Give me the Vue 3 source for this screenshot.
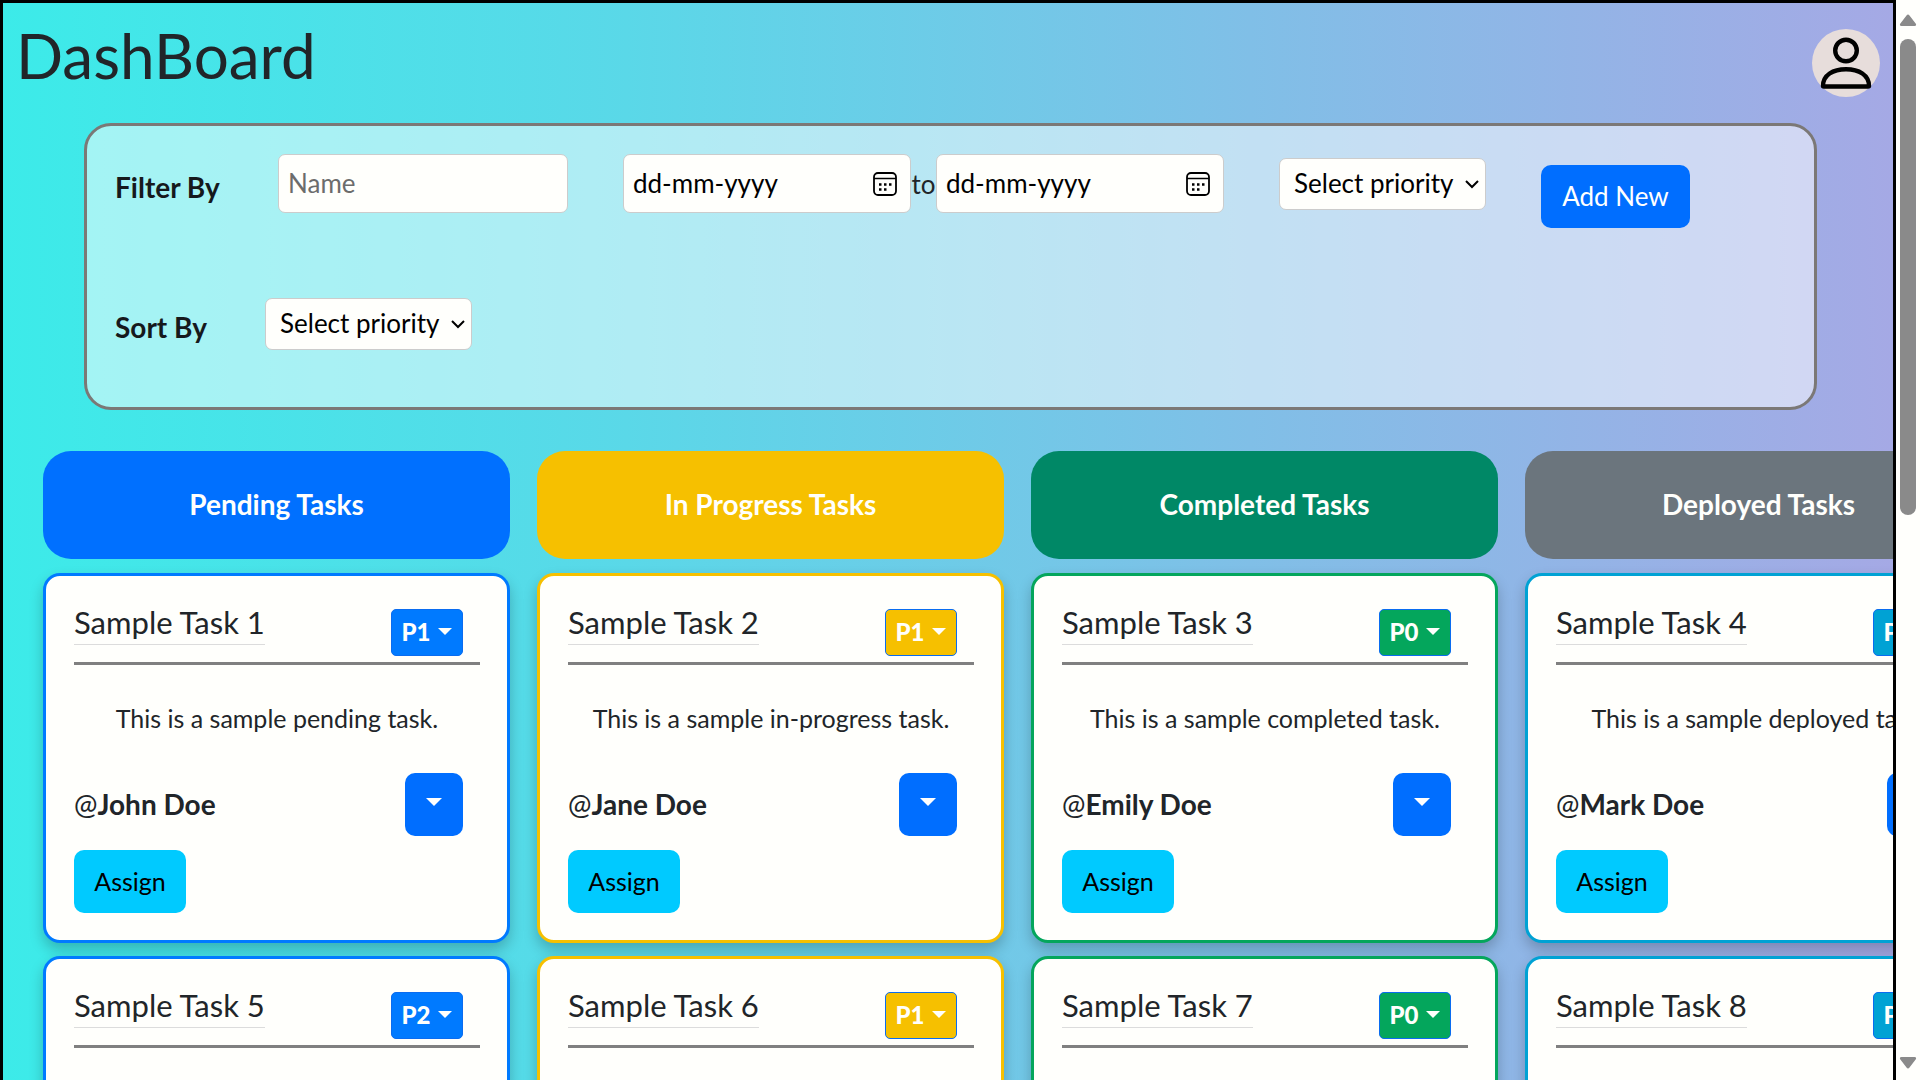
<script setup>
import { ref } from 'vue'

const name = ref('')
const from = ref('')
const to = ref('')

const columns = [
  {
    title: 'Pending Tasks',
    tone: 'pending',
    tasks: [
      { title: 'Sample Task 1', priority: 'P1', text: 'This is a sample pending task.', owner: 'John Doe' },
      { title: 'Sample Task 5', priority: 'P2' },
    ],
  },
  {
    title: 'In Progress Tasks',
    tone: 'progress',
    tasks: [
      { title: 'Sample Task 2', priority: 'P1', text: 'This is a sample in-progress task.', owner: 'Jane Doe' },
      { title: 'Sample Task 6', priority: 'P1' },
    ],
  },
  {
    title: 'Completed Tasks',
    tone: 'completed',
    tasks: [
      { title: 'Sample Task 3', priority: 'P0', text: 'This is a sample completed task.', owner: 'Emily Doe' },
      { title: 'Sample Task 7', priority: 'P0' },
    ],
  },
  {
    title: 'Deployed Tasks',
    tone: 'deployed',
    tasks: [
      { title: 'Sample Task 4', priority: 'P1', text: 'This is a sample deployed task.', owner: 'Mark Doe' },
      { title: 'Sample Task 8', priority: 'P1' },
    ],
  },
]
</script>

<template>
  <div class="window">
    <main class="page">
      <header class="top">
        <h1>DashBoard</h1>
        <button class="avatar" type="button" aria-label="Profile">
          <svg viewBox="0 0 68 68" fill="none" stroke="#000" stroke-width="4.4" stroke-linejoin="round">
            <circle cx="34" cy="21.500" r="10.800" />
            <path d="M11 57C11 46 21 40.300 34 40.300S57 46 57 57Q57 57.500 56 57.500H12Q11 57.500 11 57Z" />
          </svg>
        </button>
      </header>

      <section class="filters">
        <div class="row">
          <label class="caption" for="name">Filter By</label>
          <input id="name" v-model="name" class="box name" type="text" placeholder="Name" />
          <div class="range">
            <div class="box date">
              <input v-model="from" type="text" placeholder="dd-mm-yyyy" aria-label="From date" />
              <svg class="cal" viewBox="0 0 24 24" aria-hidden="true">
                <rect x="1" y="1" width="22" height="22" rx="4" fill="none" stroke="#000" stroke-width="1.800" />
                <path d="M1 6.500H23" stroke="#000" stroke-width="1.500" />
                <path d="M6 12.500h2.500M11 12.500h2.500M16 12.500h2.500M6 17.500h2.500M11 17.500h2.500" stroke="#000" stroke-width="2.500" />
              </svg>
            </div>
            <span>to</span>
            <div class="box date">
              <input v-model="to" type="text" placeholder="dd-mm-yyyy" aria-label="To date" />
              <svg class="cal" viewBox="0 0 24 24" aria-hidden="true">
                <rect x="1" y="1" width="22" height="22" rx="4" fill="none" stroke="#000" stroke-width="1.800" />
                <path d="M1 6.500H23" stroke="#000" stroke-width="1.500" />
                <path d="M6 12.500h2.500M11 12.500h2.500M16 12.500h2.500M6 17.500h2.500M11 17.500h2.500" stroke="#000" stroke-width="2.500" />
              </svg>
            </div>
          </div>
          <div class="pick">
            <select class="box" aria-label="Filter priority">
              <option>Select priority</option>
            </select>
            <svg class="chevron" viewBox="0 0 16 10" aria-hidden="true">
              <path d="M2 2l6 6 6-6" fill="none" stroke="#000" stroke-width="2" />
            </svg>
          </div>
          <button class="btn add" type="button">Add New</button>
        </div>
        <div class="row">
          <label class="caption sort" for="sort">Sort By</label>
          <div class="pick">
            <select id="sort" class="box">
              <option>Select priority</option>
            </select>
            <svg class="chevron" viewBox="0 0 16 10" aria-hidden="true">
              <path d="M2 2l6 6 6-6" fill="none" stroke="#000" stroke-width="2" />
            </svg>
          </div>
        </div>
      </section>

      <section class="board">
        <div v-for="col in columns" :key="col.title" class="column" :class="col.tone">
          <h2>{{ col.title }}</h2>
          <article v-for="task in col.tasks" :key="task.title" class="card">
            <div class="head">
              <h3>{{ task.title }}</h3>
              <button class="priority" type="button">{{ task.priority }}<i class="caret"></i></button>
            </div>
            <template v-if="task.text">
              <p>{{ task.text }}</p>
              <div class="owner">
                <span>@<b>{{ task.owner }}</b></span>
                <button class="btn more" type="button" aria-label="Change status"><i class="caret"></i></button>
              </div>
              <button class="btn assign" type="button">Assign</button>
            </template>
          </article>
        </div>
      </section>
    </main>

    <div class="scrollbar" aria-hidden="true">
      <svg viewBox="0 0 18 12"><path d="M7.500 1.500Q9-.5 10.500 1.500L17 10Q17.500 12 15.500 12H2.500Q.5 12 1 10Z" fill="#8a8a8a" /></svg>
      <div class="track">
        <div class="thumb"></div>
        <div class="rest"></div>
      </div>
      <svg viewBox="0 0 18 12"><path d="M7.500 10.500Q9 12.500 10.500 10.500L17 2Q17.500 0 15.500 0H2.500Q.5 0 1 2Z" fill="#8a8a8a" /></svg>
    </div>
  </div>
</template>

<style>
body {
  margin: 0;
  overflow: hidden;
}
</style>

<style scoped>
* {
  box-sizing: border-box;
}
.window {
  display: flex;
  height: 100vh;
  background: #fffffc;
  font-family: "Gill Sans MT", Lato, "Liberation Sans", sans-serif;
  font-size: 25px;
  line-height: 38px;
  color: #212529;
}
button,
input,
select {
  font: inherit;
  margin: 0;
}
h1,
h2,
h3,
p {
  margin: 0;
}
.page {
  flex: 1;
  min-width: 0;
  overflow: hidden;
  border: solid #000;
  border-width: 3px 3px 0;
  background: linear-gradient(90deg, #3cebe9, #5ad8e8 33%, #80bfe7 66%, #a5a9e5);
}
.top {
  display: flex;
  justify-content: space-between;
  align-items: flex-start;
  height: 120px;
  padding: 12px 13px 0;
}
h1 {
  font-size: 62px;
  line-height: 80px;
  font-weight: 400;
}
.avatar {
  width: 68px;
  height: 68px;
  margin-top: 14px;
  padding: 0;
  border: 0;
  border-radius: 50%;
  background: #e7dddb;
}
.avatar svg {
  display: block;
}
.filters {
  height: 287px;
  margin: 0 76px 0 81px;
  padding: 28px;
  border: 3px solid #7b7876;
  border-radius: 27px;
  background: rgba(255, 255, 255, 0.52);
  font-size: 26px;
}
.row {
  display: flex;
  align-items: flex-start;
  gap: 55px;
  height: 140px;
}
.caption {
  width: 108px;
  padding-top: 14px;
  color: #16191c;
  font-size: 28px;
  font-weight: 700;
  white-space: nowrap;
}
.sort {
  width: 95px;
}
.box {
  border: 1px solid #ccc;
  border-radius: 7px;
  background: #fffffc;
  color: #000;
}
.name {
  width: 290px;
  height: 59px;
  padding: 0 9px 2px;
}
.name::placeholder {
  color: #6c6c6c;
  opacity: 1;
}
.range {
  display: flex;
  align-items: center;
}
.range > span {
  width: 25px;
  text-align: center;
}
.date {
  display: flex;
  align-items: center;
  width: 288px;
  height: 59px;
  padding: 0 13px 0 9px;
}
.date input {
  flex: 1;
  min-width: 0;
  padding: 0 0 2px;
  border: 0;
  background: none;
  color: #000;
}
.date input::placeholder {
  color: #000;
  opacity: 1;
}
.cal {
  width: 24px;
  height: 24px;
}
.pick {
  position: relative;
  padding-top: 4px;
}
.pick select {
  display: block;
  appearance: none;
  width: 207px;
  height: 52px;
  padding: 0 30px 2px 14px;
}
.chevron {
  position: absolute;
  right: 6px;
  top: 25px;
  width: 16px;
  height: 10px;
}
.btn {
  height: 63px;
  padding: 0 0 2px;
  border: 0;
  border-radius: 10px;
  background: #006eff;
  color: #fff;
}
.add {
  width: 149px;
  margin-top: 11px;
}
.board {
  display: grid;
  grid-auto-flow: column;
  grid-auto-columns: 467px;
  gap: 27px;
  padding: 41px 0 0 40px;
}
.column {
  --tone: #0070ff;
  --badge: #007aff;
}
.progress {
  --tone: #f6c000;
  --badge: #f6c000;
}
.completed {
  --tone: #008866;
  --badge: #04a65c;
}
.deployed {
  --tone: #6b757d;
  --badge: #00a2d4;
}
h2 {
  height: 108px;
  margin-bottom: 14px;
  border-radius: 28px;
  background: var(--tone);
  color: #fffffc;
  font-size: 28px;
  line-height: 106px;
  text-align: center;
}
.card {
  height: 370px;
  margin-bottom: 13px;
  padding: 24px 27px 24px 28px;
  border: 3px solid var(--badge);
  border-radius: 17px;
  background: #fffffc;
  box-shadow: 0 7px 14px rgba(0, 0, 0, 0.22);
}
.head {
  display: flex;
  justify-content: space-between;
  align-items: flex-start;
  height: 65px;
  padding-right: 17px;
  border-bottom: 3px solid #808080;
}
h3 {
  height: 45px;
  border-bottom: 1px solid #dcdcdc;
  font-size: 31px;
  line-height: 44px;
  font-weight: 400;
}
.priority {
  display: flex;
  align-items: center;
  justify-content: center;
  gap: 8px;
  width: 72px;
  height: 47px;
  margin-top: 9px;
  padding: 0 0 2px;
  border: 1px solid #0a6cf0;
  border-radius: 5px;
  background: var(--badge);
  color: #fffffc;
  font-size: 24px;
  font-weight: 900;
}
.caret {
  border: 7px solid transparent;
  border-top-color: currentColor;
  border-bottom: 0;
}
.more .caret {
  display: block;
  width: 0;
  margin: -4px auto 0;
  border-width: 8px 8px 0;
}
.head + p {
  margin-top: 34px;
  text-align: center;
}
.owner {
  display: flex;
  justify-content: space-between;
  align-items: center;
  height: 63px;
  margin-top: 36px;
  padding-right: 17px;
}
.owner span {
  padding-bottom: 2px;
  font-size: 28px;
}
.more {
  width: 58px;
}
.assign {
  width: 112px;
  margin-top: 14px;
  background: #00caff;
  color: #000;
}
.scrollbar {
  display: flex;
  flex-direction: column;
  align-items: center;
  width: 24px;
  padding: 14px 0 11px;
}
.scrollbar svg {
  width: 18px;
  height: 12px;
}
.track {
  display: flex;
  flex: 1;
  flex-direction: column;
  width: 16px;
  padding: 13px 0;
}
.thumb {
  flex: 9;
  border-radius: 8px;
  background: #8a8a8a;
}
.rest {
  flex: 10;
}
</style>
